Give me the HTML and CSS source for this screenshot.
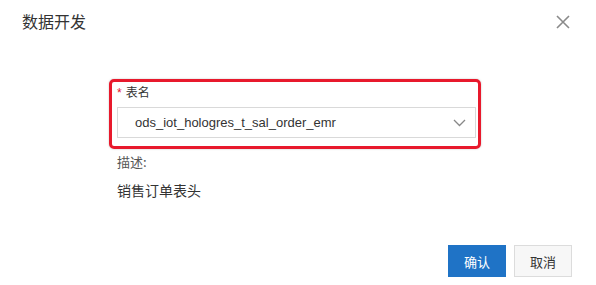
FILE: index.html
```html
<!DOCTYPE html>
<html lang="zh">
<head>
<meta charset="utf-8">
<link rel="stylesheet" href="styles.css">
</head>
<body>
<div class="dialog">
  <div class="header">
    <div class="title">数据开发</div>
    <svg class="close" width="14" height="14" viewBox="0 0 14 14"><path d="M1 1L13 13M13 1L1 13" stroke="#8a8a8a" stroke-width="1.6" fill="none"/></svg>
  </div>
  <div class="content">
    <div class="highlight">
      <div class="label"><span class="req">*</span>表名</div>
      <div class="select">
        <span class="value">ods_iot_hologres_t_sal_order_emr</span>
        <svg class="chev" width="13" height="8" viewBox="0 0 13 8"><path d="M1 1L6.5 6.5L12 1" stroke="#888" stroke-width="1.3" fill="none"/></svg>
      </div>
    </div>
    <div class="desc-label">描述:</div>
    <div class="desc">销售订单表头</div>
  </div>
  <div class="footer">
    <button class="btn primary">确认</button>
    <button class="btn">取消</button>
  </div>
</div>
</body>
</html>
```
FILE: styles.css
```css
html, body {
  margin: 0;
  padding: 0;
  background: #fff;
}
body {
  font-family: "Noto Sans CJK SC", "Liberation Sans", sans-serif;
  color: #333;
}
.dialog {
  width: 596px;
  height: 285px;
  display: flex;
  flex-direction: column;
  box-sizing: border-box;
}
.header {
  display: flex;
  justify-content: space-between;
  align-items: center;
  padding: 10px 26px 0 22px;
  height: 22px;
}
.title {
  font-size: 16px;
  line-height: 22px;
  color: #333;
}
.close {
  display: block;
  margin-top: 1px;
}
.content {
  padding-top: 47px;
}
.highlight {
  margin-left: 109px;
  width: 372px;
  box-sizing: border-box;
  border: 3px solid #e8192c;
  border-radius: 5px;
  padding: 1px 2px 8px 5px;
  box-shadow: 0 0 2px rgba(0, 0, 0, 0.25);
}
.label {
  font-size: 12px;
  line-height: 18px;
  height: 18px;
  margin-bottom: 6px;
  color: #333;
}
.req {
  color: #e5162a;
  font-family: "Liberation Sans", sans-serif;
  margin-right: 4px;
}
.select {
  height: 31px;
  box-sizing: border-box;
  border: 1px solid #d9d9d9;
  display: flex;
  align-items: center;
  justify-content: space-between;
  padding: 0 9px 0 17px;
}
.value {
  font-family: "Liberation Sans", sans-serif;
  font-size: 13px;
  color: #333;
}
.chev {
  display: block;
}
.desc-label {
  margin-left: 117px;
  margin-top: 3px;
  font-size: 13px;
  line-height: 20px;
  color: #555;
}
.desc {
  margin-left: 117px;
  margin-top: 8px;
  font-size: 14px;
  line-height: 20px;
  color: #333;
}
.footer {
  margin-top: auto;
  display: flex;
  justify-content: flex-end;
  gap: 8px;
  padding: 0 24px 8px 0;
}
.btn {
  width: 58px;
  height: 32px;
  box-sizing: border-box;
  border: 1px solid #dcdcdc;
  background: #f7f7f7;
  color: #333;
  font-family: "Noto Sans CJK SC", sans-serif;
  font-size: 13px;
  padding: 0;
  border-radius: 0;
}
.btn.primary {
  background: #1f73c6;
  border-color: #1f73c6;
  color: #fff;
}
```
